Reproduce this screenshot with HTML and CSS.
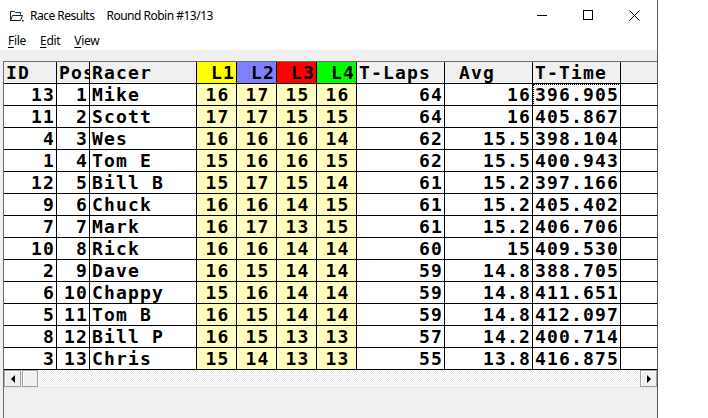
FILE: index.html
```html
<!DOCTYPE html>
<html>
<head>
<meta charset="utf-8">
<link rel="stylesheet" href="styles.css">
</head>
<body>
<div class="window">
  <div class="titlebar">
    <svg class="appicon" width="14" height="12" viewBox="0 0 14 12">
      <path d="M0.5 1.5 H4.5 L5.5 2.5 H10.5 V4.5 M0.5 1.5 V10.5 H10.5 L12.5 5.5 H2.5 L0.5 10.5" fill="none" stroke="#222" stroke-width="1"/>
      <rect x="12" y="10" width="1.5" height="1.5" fill="#222"/>
    </svg>
    <span class="title">Race Results</span>
    <span class="subtitle">Round Robin #13/13</span>
    <div class="controls">
      <div class="ctl"><svg width="10" height="10" viewBox="0 0 10 10"><path d="M0 5.5 H10" stroke="#000" stroke-width="1"/></svg></div>
      <div class="ctl"><svg width="10" height="10" viewBox="0 0 10 10"><rect x="0.5" y="0.5" width="9" height="9" fill="none" stroke="#000" stroke-width="1"/></svg></div>
      <div class="ctl"><svg width="11" height="11" viewBox="0 0 11 11"><path d="M0.5 0.5 L10.5 10.5 M10.5 0.5 L0.5 10.5" stroke="#000" stroke-width="1"/></svg></div>
    </div>
  </div>
  <div class="menubar">
    <span class="menu"><u>F</u>ile</span>
    <span class="menu"><u>E</u>dit</span>
    <span class="menu"><u>V</u>iew</span>
  </div>
  <div class="client">
    <div class="gridarea">
      <div class="grid">
        <div class="c h">ID</div><div class="c h">Pos</div><div class="c h">Racer</div><div class="c h r h1">L1</div><div class="c h r h2">L2</div><div class="c h r h3">L3</div><div class="c h r h4">L4</div><div class="c h">T-Laps</div><div class="c h"> Avg</div><div class="c h">T-Time</div><div class="c h"></div>

        <div class="c r">13</div><div class="c r">1</div><div class="c">Mike</div><div class="c m">16</div><div class="c m">17</div><div class="c m">15</div><div class="c m">16</div><div class="c r">64</div><div class="c r">16</div><div class="c focus">396.905</div><div class="c"></div>
        <div class="c r">11</div><div class="c r">2</div><div class="c">Scott</div><div class="c m">17</div><div class="c m">17</div><div class="c m">15</div><div class="c m">15</div><div class="c r">64</div><div class="c r">16</div><div class="c">405.867</div><div class="c"></div>
        <div class="c r">4</div><div class="c r">3</div><div class="c">Wes</div><div class="c m">16</div><div class="c m">16</div><div class="c m">16</div><div class="c m">14</div><div class="c r">62</div><div class="c r">15.5</div><div class="c">398.104</div><div class="c"></div>
        <div class="c r">1</div><div class="c r">4</div><div class="c">Tom E</div><div class="c m">15</div><div class="c m">16</div><div class="c m">16</div><div class="c m">15</div><div class="c r">62</div><div class="c r">15.5</div><div class="c">400.943</div><div class="c"></div>
        <div class="c r">12</div><div class="c r">5</div><div class="c">Bill B</div><div class="c m">15</div><div class="c m">17</div><div class="c m">15</div><div class="c m">14</div><div class="c r">61</div><div class="c r">15.2</div><div class="c">397.166</div><div class="c"></div>
        <div class="c r">9</div><div class="c r">6</div><div class="c">Chuck</div><div class="c m">16</div><div class="c m">16</div><div class="c m">14</div><div class="c m">15</div><div class="c r">61</div><div class="c r">15.2</div><div class="c">405.402</div><div class="c"></div>
        <div class="c r">7</div><div class="c r">7</div><div class="c">Mark</div><div class="c m">16</div><div class="c m">17</div><div class="c m">13</div><div class="c m">15</div><div class="c r">61</div><div class="c r">15.2</div><div class="c">406.706</div><div class="c"></div>
        <div class="c r">10</div><div class="c r">8</div><div class="c">Rick</div><div class="c m">16</div><div class="c m">16</div><div class="c m">14</div><div class="c m">14</div><div class="c r">60</div><div class="c r">15</div><div class="c">409.530</div><div class="c"></div>
        <div class="c r">2</div><div class="c r">9</div><div class="c">Dave</div><div class="c m">16</div><div class="c m">15</div><div class="c m">14</div><div class="c m">14</div><div class="c r">59</div><div class="c r">14.8</div><div class="c">388.705</div><div class="c"></div>
        <div class="c r">6</div><div class="c r">10</div><div class="c">Chappy</div><div class="c m">15</div><div class="c m">16</div><div class="c m">14</div><div class="c m">14</div><div class="c r">59</div><div class="c r">14.8</div><div class="c">411.651</div><div class="c"></div>
        <div class="c r">5</div><div class="c r">11</div><div class="c">Tom B</div><div class="c m">16</div><div class="c m">15</div><div class="c m">14</div><div class="c m">14</div><div class="c r">59</div><div class="c r">14.8</div><div class="c">412.097</div><div class="c"></div>
        <div class="c r">8</div><div class="c r">12</div><div class="c">Bill P</div><div class="c m">16</div><div class="c m">15</div><div class="c m">13</div><div class="c m">13</div><div class="c r">57</div><div class="c r">14.2</div><div class="c">400.714</div><div class="c"></div>
        <div class="c r">3</div><div class="c r">13</div><div class="c">Chris</div><div class="c m">15</div><div class="c m">14</div><div class="c m">13</div><div class="c m">13</div><div class="c r">55</div><div class="c r">13.8</div><div class="c">416.875</div><div class="c"></div>
      </div>
      <div class="hscroll">
        <div class="sbtn"><span class="tri-left"></span></div>
        <div class="thumb"></div>
        <div class="track"></div>
        <div class="sbtn"><span class="tri-right"></span></div>
      </div>
    </div>
  </div>
</div>
</body>
</html>
```

FILE: styles.css
```css
html, body {
  margin: 0;
  padding: 0;
  background: #fff;
}
body {
  width: 708px;
  height: 418px;
  overflow: hidden;
  font-family: "Noto Sans", "Open Sans", sans-serif;
}
.window {
  width: 657px;
  height: 418px;
  border-right: 1px solid #5a5a5a;
  display: flex;
  flex-direction: column;
  background: #fff;
}
.titlebar {
  height: 30px;
  display: flex;
  align-items: center;
  font-size: 12px;
  color: #000;
  letter-spacing: -0.5px;
}
.appicon {
  margin-left: 10px;
  margin-top: 1px;
}
.title {
  margin-left: 6px;
}
.subtitle {
  margin-left: 12px;
}
.controls {
  margin-left: auto;
  display: flex;
  height: 30px;
}
.ctl {
  width: 46px;
  height: 30px;
  display: flex;
  align-items: center;
  justify-content: center;
}
.menubar {
  height: 20px;
  display: flex;
  align-items: center;
  padding-left: 8px;
  gap: 14px;
  font-size: 12px;
  letter-spacing: -0.3px;
}
.menu u {
  text-decoration-thickness: 1px;
  text-underline-offset: 2px;
}
.client {
  flex: 1;
  background: #f0f0f0;
  padding: 11px 0 0 3px;
  display: flex;
}
.gridarea {
  width: 653px;
  border-left: 1px solid #6d6d6d;
  display: flex;
  flex-direction: column;
  overflow: hidden;
}
.grid {
  border-top: 1px solid #6d6d6d;
  display: grid;
  grid-template-columns: 53px 33px 107px 40px 40px 40px 40px 88px 88px 88px 88px;
  grid-auto-rows: 22px;
  width: 705px;
  font-family: "DejaVu Sans Mono", monospace;
  font-weight: bold;
  font-size: 18px;
  letter-spacing: 1.15px;
  color: #000;
}
.c {
  box-sizing: border-box;
  border-right: 1px solid #000;
  border-bottom: 1px solid #000;
  background: #fff;
  line-height: 21px;
  padding: 0 1px 0 2px;
  white-space: pre;
  overflow: hidden;
}
.h {
  background: #f0f0f0;
}
.r {
  text-align: right;
}
.m {
  background: #ffffc0;
  text-align: center;
  padding-left: 3px;
}
.h1 { background: #ffff00; }
.h2 { background: #8080ff; }
.h3 { background: #ff0000; }
.h4 { background: #00ff00; }
.focus {
  outline: 1px dotted #000;
  outline-offset: -1px;
  position: relative;
}
.hscroll {
  height: 17px;
  display: flex;
  border-bottom: 1px solid #e6e6e6;
}
.sbtn, .thumb {
  box-sizing: border-box;
  width: 17px;
  height: 17px;
  background: #f0f0f0;
  border: 1px solid #a0a0a0;
  box-shadow: inset 1px 1px #fff;
  display: flex;
  align-items: center;
  justify-content: center;
}
.thumb {
  width: 16px;
  margin-left: 1px;
}
.track {
  flex: 1;
  background: repeating-conic-gradient(#ffffff 0 25%, #ececec 0 50%) 0 0 / 2px 2px;
}
.tri-left {
  width: 0;
  height: 0;
  border-top: 4px solid transparent;
  border-bottom: 4px solid transparent;
  border-right: 4px solid #000;
}
.tri-right {
  width: 0;
  height: 0;
  border-top: 4px solid transparent;
  border-bottom: 4px solid transparent;
  border-left: 4px solid #000;
}
```
